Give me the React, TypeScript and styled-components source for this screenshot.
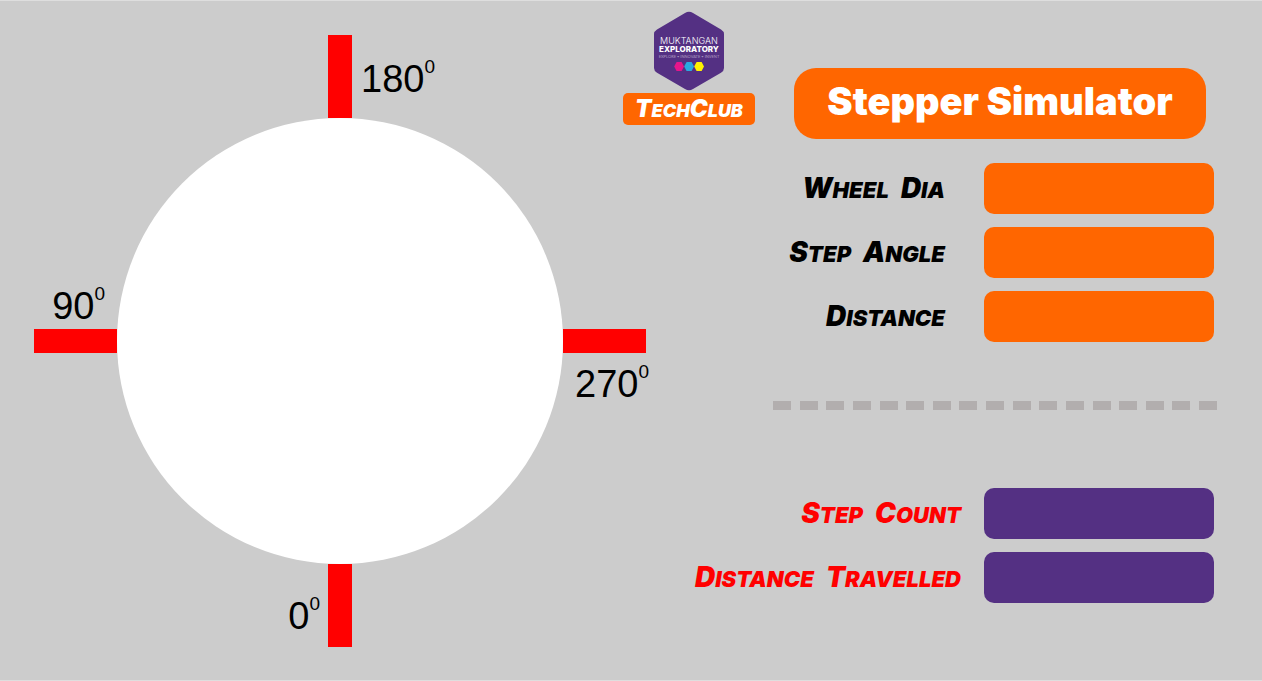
import React from "react";
import styled, { createGlobalStyle } from "styled-components";

const ORANGE = "#ff6600";
const PURPLE = "#543083";
const RED = "#ff0000";

const GlobalStyle = createGlobalStyle`
  *, *::before, *::after { box-sizing: border-box; }
  body {
    margin: 0;
    background: #cccccc;
    color: #000;
    font-family: "Liberation Sans", Arial, sans-serif;
  }
`;

const Page = styled.main`
  display: grid;
  grid-template-columns: minmax(0, 612fr) minmax(0, 571fr);
  align-items: start;
  min-height: 100vh;
  padding: 10px 45px 33px 34px;
  border: solid #dedede;
  border-width: 1px 0;
`;

const Dial = styled.section`
  display: grid;
  grid-template-columns: minmax(0, 83fr) minmax(0, 446fr) minmax(0, 83fr);
  grid-template-rows: minmax(0, 83fr) minmax(0, 446fr) minmax(0, 83fr);
  aspect-ratio: 1;
  margin-top: 24px;
`;

const Wheel = styled.div`
  grid-area: 2 / 2;
  border-radius: 50%;
  background: #fff;
`;

const VerticalMark = styled.div<{ $row: number }>`
  grid-area: ${(p) => p.$row} / 2;
  display: grid;
  grid-template-columns: 1fr 24px 1fr;
`;

const HorizontalMark = styled.div<{ $column: number }>`
  grid-area: 2 / ${(p) => p.$column};
  display: grid;
  grid-template-columns: minmax(0, 1fr);
  grid-template-rows: 1fr 24px 1fr;
`;

const Arm = styled.div<{ $vertical?: boolean }>`
  background: ${RED};
  grid-area: ${(p) => (p.$vertical ? "1 / 2" : "2 / 1")};
`;

const Angle = styled.div<{ $area: string; $end?: boolean; $bottom?: boolean; $pad: string }>`
  grid-area: ${(p) => p.$area};
  justify-self: ${(p) => (p.$end ? "end" : "start")};
  align-self: ${(p) => (p.$bottom ? "end" : "start")};
  padding: ${(p) => p.$pad};
  font-size: 38px;
  line-height: 40px;
  white-space: nowrap;

  sup {
    font-size: 19px;
    line-height: 0;
    vertical-align: 19px;
  }
`;

const Panel = styled.section`
  margin-left: -23px;
`;

const Header = styled.header`
  display: flex;
  align-items: flex-end;
  gap: 39px;
  padding-right: 11px;
`;

const Brand = styled.div`
  display: flex;
  flex-direction: column;
  align-items: center;
  flex: none;
  gap: 2px;
  width: 132px;
  margin-bottom: 14px;
`;

const Logo = styled.svg`
  display: block;
  width: 70px;
  height: 80px;
`;

const Marker = styled.span<{ $small?: boolean }>`
  font-family: Inter, sans-serif;
  font-size: ${(p) => (p.$small ? 18 : 22)}px;
  font-style: italic;
  font-weight: 900;
  line-height: 32px;
  text-transform: uppercase;
  white-space: nowrap;
`;

const Word = styled.span`
  display: inline-block;

  &::first-letter {
    font-size: 28px;
  }

  & + & {
    margin-left: 12px;
  }
`;

const SmallWord = styled.span`
  display: inline-block;

  &::first-letter {
    font-size: 24px;
  }
`;

const Badge = styled.div`
  width: 100%;
  height: 32px;
  border-radius: 5px;
  background: ${ORANGE};
  color: #fff;
  text-align: center;
`;

const Title = styled.h1`
  flex: 1;
  margin: 0;
  padding: 11px 0 16px;
  border-radius: 22px;
  background: ${ORANGE};
  color: #fff;
  font: 900 38px/44px Inter, sans-serif;
  text-align: center;
  white-space: nowrap;
`;

const Fields = styled.div`
  display: grid;
  gap: 13px;
  padding-right: 3px;
`;

const Inputs = styled(Fields)`
  margin-top: 24px;
`;

const Results = styled(Fields)`
  margin-top: 78px;
`;

const Row = styled.div<{ $gap: number }>`
  display: flex;
  align-items: center;
  justify-content: flex-end;
  gap: ${(p) => p.$gap}px;
`;

const FieldLabel = styled.label<{ $color?: string }>`
  color: ${(p) => p.$color ?? "#000"};
`;

const Input = styled.input`
  width: 230px;
  height: 51px;
  padding: 0 16px;
  border: 0;
  border-radius: 10px;
  background: ${ORANGE};
  color: #fff;
  font: 700 24px "Liberation Sans", sans-serif;
`;

const Output = styled.output`
  display: block;
  width: 230px;
  height: 51px;
  border-radius: 10px;
  background: ${PURPLE};
  color: #fff;
`;

const Divider = styled.div`
  display: flex;
  justify-content: space-between;
  margin: 59px 0 0 150px;
`;

const Dash = styled.span`
  width: 18px;
  height: 9px;
  background: #b2aeae;
`;

const inputs = [
  { id: "wheel-dia", label: "Wheel Dia" },
  { id: "step-angle", label: "Step Angle" },
  { id: "distance", label: "Distance" },
];

const results = [
  { id: "step-count", label: "Step Count" },
  { id: "distance-travelled", label: "Distance Travelled" },
];

function MarkerText({ text }: { text: string }) {
  return (
    <Marker>
      {text.split(" ").map((word) => (
        <Word key={word}>{word}</Word>
      ))}
    </Marker>
  );
}

function MuktanganLogo() {
  return (
    <Logo viewBox="0 0 70 80" role="img" aria-label="Muktangan Exploratory">
      <path
        d="M31 2.1Q35 -.5 39 2.1L67 18.4Q70 20.2 70 23V57Q70 60 67 61.7L39 77.9Q35 80.5 31 77.9L3 61.7Q0 60 0 57V23Q0 20.2 3 18.4Z"
        fill={PURPLE}
      />
      <g fill="#fff" textAnchor="middle" fontFamily="Inter, sans-serif">
        <text x="35" y="33" fontSize="9" fontWeight="300">MUKTANGAN</text>
        <text x="35" y="41" fontSize="8" fontWeight="800">EXPLORATORY</text>
        <text x="35" y="47" fontSize="4" fillOpacity=".5" fontFamily="Lato, sans-serif">EXPLORE • INNOVATE • INVENT</text>
      </g>
      <path d="M22.6 51h5l2.4 4.5-2.4 4.5h-5l-2.4-4.5Z" fill="#e5158b" />
      <path d="M32.6 51h5l2.4 4.5-2.4 4.5h-5l-2.4-4.5Z" fill="#2aa8e0" />
      <path d="M42.6 51h5l2.4 4.5-2.4 4.5h-5l-2.4-4.5Z" fill="#fff200" />
    </Logo>
  );
}

export default function App() {
  return (
    <>
      <GlobalStyle />
      <Page>
        <Dial aria-label="Wheel angle">
          <VerticalMark $row={1}>
            <Arm $vertical />
            <Angle $area="1 / 3" $pad="24px 0 0 9px">180<sup>0</sup></Angle>
          </VerticalMark>
          <HorizontalMark $column={1}>
            <Angle $area="1 / 1" $end $bottom $pad="0 12px 3px 0">90<sup>0</sup></Angle>
            <Arm />
          </HorizontalMark>
          <Wheel />
          <HorizontalMark $column={3}>
            <Arm />
            <Angle $area="3 / 1" $pad="11px 0 0 12px">270<sup>0</sup></Angle>
          </HorizontalMark>
          <VerticalMark $row={3}>
            <Angle $area="1 / 1" $end $pad="32px 8px 0 0">0<sup>0</sup></Angle>
            <Arm $vertical />
          </VerticalMark>
        </Dial>

        <Panel>
          <Header>
            <Brand>
              <MuktanganLogo />
              <Badge>
                <Marker $small>
                  <SmallWord>Tech</SmallWord>
                  <SmallWord>Club</SmallWord>
                </Marker>
              </Badge>
            </Brand>
            <Title>Stepper Simulator</Title>
          </Header>

          <Inputs>
            {inputs.map(({ id, label }) => (
              <Row key={id} $gap={39}>
                <FieldLabel htmlFor={id}><MarkerText text={label} /></FieldLabel>
                <Input id={id} type="text" inputMode="decimal" />
              </Row>
            ))}
          </Inputs>

          <Divider role="separator">
            {Array.from({ length: 17 }, (_, i) => <Dash key={i} />)}
          </Divider>

          <Results>
            {results.map(({ id, label }) => (
              <Row key={id} $gap={23}>
                <FieldLabel htmlFor={id} $color={RED}><MarkerText text={label} /></FieldLabel>
                <Output id={id} />
              </Row>
            ))}
          </Results>
        </Panel>
      </Page>
    </>
  );
}
